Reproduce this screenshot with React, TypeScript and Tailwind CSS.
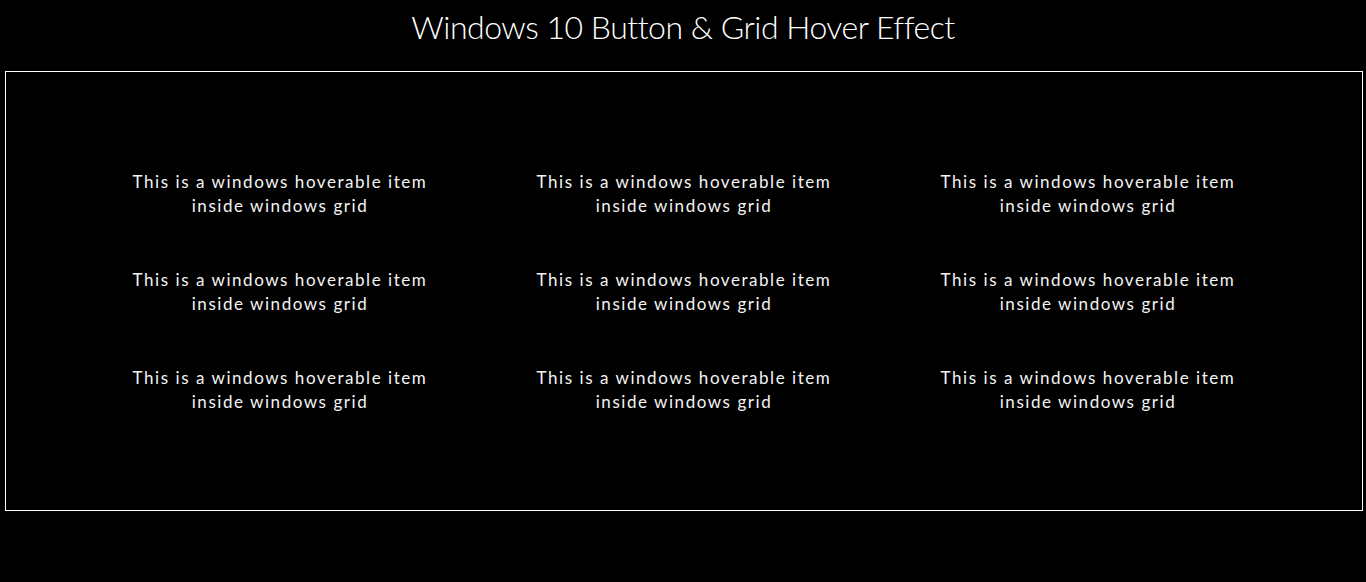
import React from 'react';

const items = Array.from({ length: 9 }, (_, i) => i);

export default function App() {
  return (
    <div className="min-h-[582px] bg-black text-white font-['Lato','Noto_Sans',sans-serif]">
      <h1 className="pt-[7px] h-[71px] text-center text-[32px] font-light leading-[40px] tracking-[-0.5px]">
        Windows 10 Button &amp; Grid Hover Effect
      </h1>

      {/* grid container */}
      <div className="ml-[5px] mr-[3px] h-[440px] border border-white flex items-center pt-[2px]">
        <div className="mx-auto grid w-[1212px] grid-cols-3">
          {items.map(i => (
            <div
              key={i}
              className="flex h-[98px] items-center justify-center text-center text-[17px] leading-[24px] tracking-[1.55px] text-[#f4f4f4]"
            >
              <p>
                This is a windows hoverable item
                <br />
                inside windows grid
              </p>
            </div>
          ))}
        </div>
      </div>
    </div>
  );
}
